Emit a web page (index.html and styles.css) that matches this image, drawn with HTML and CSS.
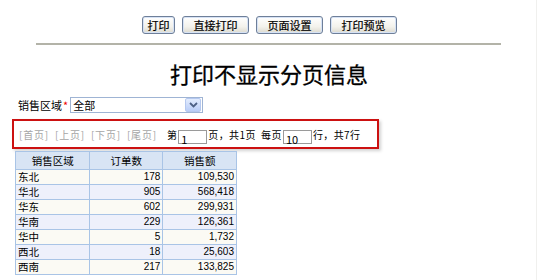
FILE: index.html
```html
<!DOCTYPE html>
<html>
<head>
<meta charset="utf-8">
<link rel="stylesheet" href="styles.css">
</head>
<body>
<div class="page">
  <div class="toolbar">
    <button class="btn btn-sm">打印</button>
    <button class="btn">直接打印</button>
    <button class="btn">页面设置</button>
    <button class="btn">打印预览</button>
  </div>
  <div class="divider"></div>
  <h1 class="title">打印不显示分页信息</h1>
  <div class="filter">
    <span class="label">销售区域</span><span class="req">*</span>
    <div class="select">
      <span class="select-text">全部</span>
      <span class="select-btn"><svg width="9" height="6" viewBox="0 0 9 6"><path d="M1 1 L4.5 4.5 L8 1" fill="none" stroke="#4d6185" stroke-width="1.8"/></svg></span>
    </div>
  </div>
  <div class="pager">
    <span class="pl">[首页]</span><span class="pl">[上页]</span><span class="pl">[下页]</span><span class="pl">[尾页]</span>
    <span class="pt first">第</span><span class="inp">1</span><span class="pt">页，共1页&nbsp;&nbsp;每页</span><span class="inp">10</span><span class="pt">行，共7行</span>
  </div>
  <table class="grid">
    <thead>
      <tr><th>销售区域</th><th>订单数</th><th>销售额</th></tr>
    </thead>
    <tbody>
      <tr><td>东北</td><td class="n">178</td><td class="n">109,530</td></tr>
      <tr><td>华北</td><td class="n">905</td><td class="n">568,418</td></tr>
      <tr><td>华东</td><td class="n">602</td><td class="n">299,931</td></tr>
      <tr><td>华南</td><td class="n">229</td><td class="n">126,361</td></tr>
      <tr><td>华中</td><td class="n">5</td><td class="n">1,732</td></tr>
      <tr><td>西北</td><td class="n">18</td><td class="n">25,603</td></tr>
      <tr><td>西南</td><td class="n">217</td><td class="n">133,825</td></tr>
    </tbody>
  </table>
</div>
</body>
</html>
```

FILE: styles.css
```css
html, body {
  margin: 0;
  padding: 0;
  background: #fff;
}
body {
  font-family: "Noto Sans CJK SC", sans-serif;
  font-size: 10px;
  color: #000;
}
.page {
  width: 536px;
  height: 280px;
  border-right: 1px solid #f0f0ee;
  overflow: hidden;
}
.toolbar {
  display: flex;
  justify-content: center;
  gap: 7px;
  padding-top: 16px;
  padding-left: 3px;
}
.btn {
  width: 67px;
  height: 18px;
  padding: 0;
  font-family: "Noto Sans CJK SC", sans-serif;
  font-size: 11px;
  line-height: 14px;
  color: #000;
  border: 1px solid #6e7f99;
  border-radius: 3px;
  background: linear-gradient(#ffffff, #f3f2ec 60%, #dcdacf);
  box-shadow: inset 0 0 0 1px #d6e2f5;
  -webkit-text-stroke: 0.2px #000;
}
.btn-sm {
  width: 33px;
}
.divider {
  width: 465px;
  height: 2px;
  margin: 9px auto 0;
  background: #b3b3a8;
}
.title {
  margin: 14px 0 0;
  text-align: center;
  font-family: "Noto Sans CJK SC", sans-serif;
  font-size: 22px;
  font-weight: 400;
  line-height: 28px;
  padding-left: 2px;
  -webkit-text-stroke: 0.3px #000;
}
.filter {
  display: flex;
  align-items: center;
  margin-top: 9px;
  padding-left: 18px;
  height: 18px;
  white-space: nowrap;
  font-size: 11px;
}
.req {
  color: #e00;
  margin: 0 2px 0 1px;
  font-size: 11px;
}
.select {
  display: flex;
  align-items: center;
  justify-content: space-between;
  width: 129px;
  height: 14px;
  border: 1px solid #9fb4d4;
  background: #fff;
  padding-left: 2px;
}
.select-text {
  line-height: 14px;
}
.select-btn {
  display: flex;
  align-items: center;
  justify-content: center;
  width: 14px;
  height: 12px;
  margin-right: 1px;
  border: 1px solid #b5c8ef;
  border-radius: 2px;
  background: linear-gradient(#e3ecfd, #b9cdf7);
}
.pager {
  display: flex;
  align-items: flex-end;
  margin: 5px 0 0 12px;
  width: 358px;
  height: 25px;
  border: 2px solid #cc1111;
  box-shadow: 2px 2px 3px rgba(0,0,0,0.18);
  padding: 0 0 1px 5px;
  box-sizing: content-box;
  white-space: nowrap;
}
.pager > span {
  flex-shrink: 0;
}
.pl {
  color: #a6a6a6;
  margin-right: 6px;
  letter-spacing: 0.8px;
  line-height: 14px;
  padding-bottom: 4px;
}
.pt {
  line-height: 14px;
  padding-bottom: 4px;
  letter-spacing: 0.4px;
}
.pt.first {
  margin-left: 4px;
}
.inp {
  display: inline-block;
  box-sizing: border-box;
  width: 29px;
  height: 14px;
  border: 1px solid #9a9a9a;
  padding: 2px 0 0 2px;
  line-height: 12px;
  font-size: 11px;
  margin: 0 1px 2px 1px;
}
.grid {
  margin: 2px 0 0 15px;
  border-collapse: collapse;
  width: 222px;
}
.grid th, .grid td {
  border: 1px solid #a9c4e6;
  padding: 0 2px;
  height: 14px;
  line-height: 14px;
  font-size: 10.5px;
  white-space: nowrap;
}
.grid th {
  background: #d8e4f4;
  font-weight: normal;
  text-align: center;
  height: 17px;
  width: 73px;
}
.grid td.n {
  text-align: right;
  font-family: "Liberation Sans Narrow", "Liberation Sans", sans-serif;
  font-size: 10px;
}
.grid tbody tr:nth-child(odd) td {
  background: #fbfaf4;
}
.grid tbody tr:nth-child(even) td {
  background: #eef0fb;
}
```
